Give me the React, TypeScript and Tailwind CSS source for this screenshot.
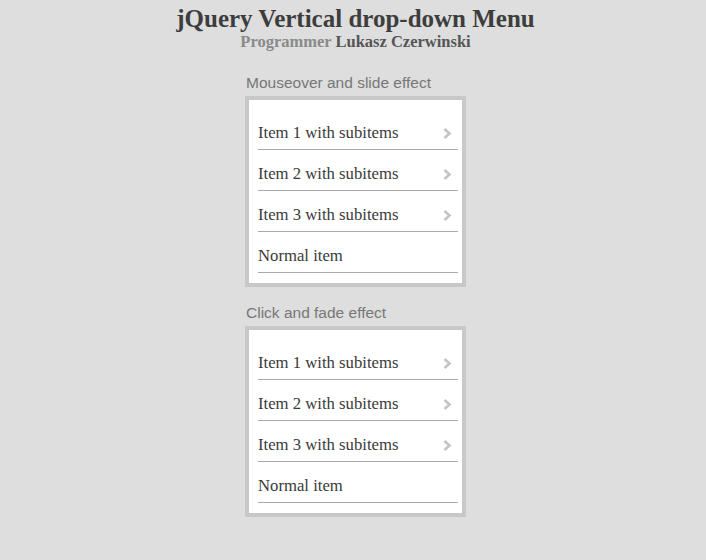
const items = [
  { label: "Item 1 with subitems", sub: true },
  { label: "Item 2 with subitems", sub: true },
  { label: "Item 3 with subitems", sub: true },
  { label: "Normal item", sub: false },
];

function Chevron() {
  return (
    <svg width="9" height="11" viewBox="0 0 9 11" className="shrink-0">
      <path d="M1.5 1 L6.5 5.5 L1.5 10" fill="none" stroke="#c4c4c4" strokeWidth="2.6" />
    </svg>
  );
}

function Menu({ title }: { title: string }) {
  return (
    <div className="flex flex-col">
      <h2 className="ml-[1px] h-[28px] pt-[1px] text-[15.5px] leading-[28px] text-[#777] font-['Liberation_Sans',Arial,sans-serif]">
        {title}
      </h2>
      <div className="w-[221px] border-[4px] border-[#c8c8c8] bg-white pt-[9px] pb-[10px]">
        <ul className="ml-[9px] w-[200px]">
          {items.map((item) => (
            <li
              key={item.label}
              className="flex h-[41px] items-center justify-between border-b border-[#aaa] pr-[6px] pt-[8px]"
            >
              <span className="text-[16.7px] text-[#3a3a3a] font-['Liberation_Serif',Georgia,serif]">{item.label}</span>
              {item.sub && <Chevron />}
            </li>
          ))}
        </ul>
      </div>
    </div>
  );
}

export default function App() {
  return (
    <div className="min-h-[560px] w-full bg-[#dedede] pl-[5px]">
      <div className="flex flex-col items-center pt-[5px]">
        <h1 className="text-[25px] font-bold leading-[28px] text-[#3d3d3d] font-['Liberation_Serif',Georgia,serif]">
          jQuery Vertical drop-down Menu
        </h1>
        <p className="text-[16.5px] font-bold leading-[18px] font-['Liberation_Serif',Georgia,serif]">
          <span className="text-[#8a8a8a]">Programmer</span>{" "}
          <span className="text-[#555]">Lukasz Czerwinski</span>
        </p>
        <div className="mt-[17px] flex flex-col gap-[11px]">
          <Menu title="Mouseover and slide effect" />
          <Menu title="Click and fade effect" />
        </div>
      </div>
    </div>
  );
}
